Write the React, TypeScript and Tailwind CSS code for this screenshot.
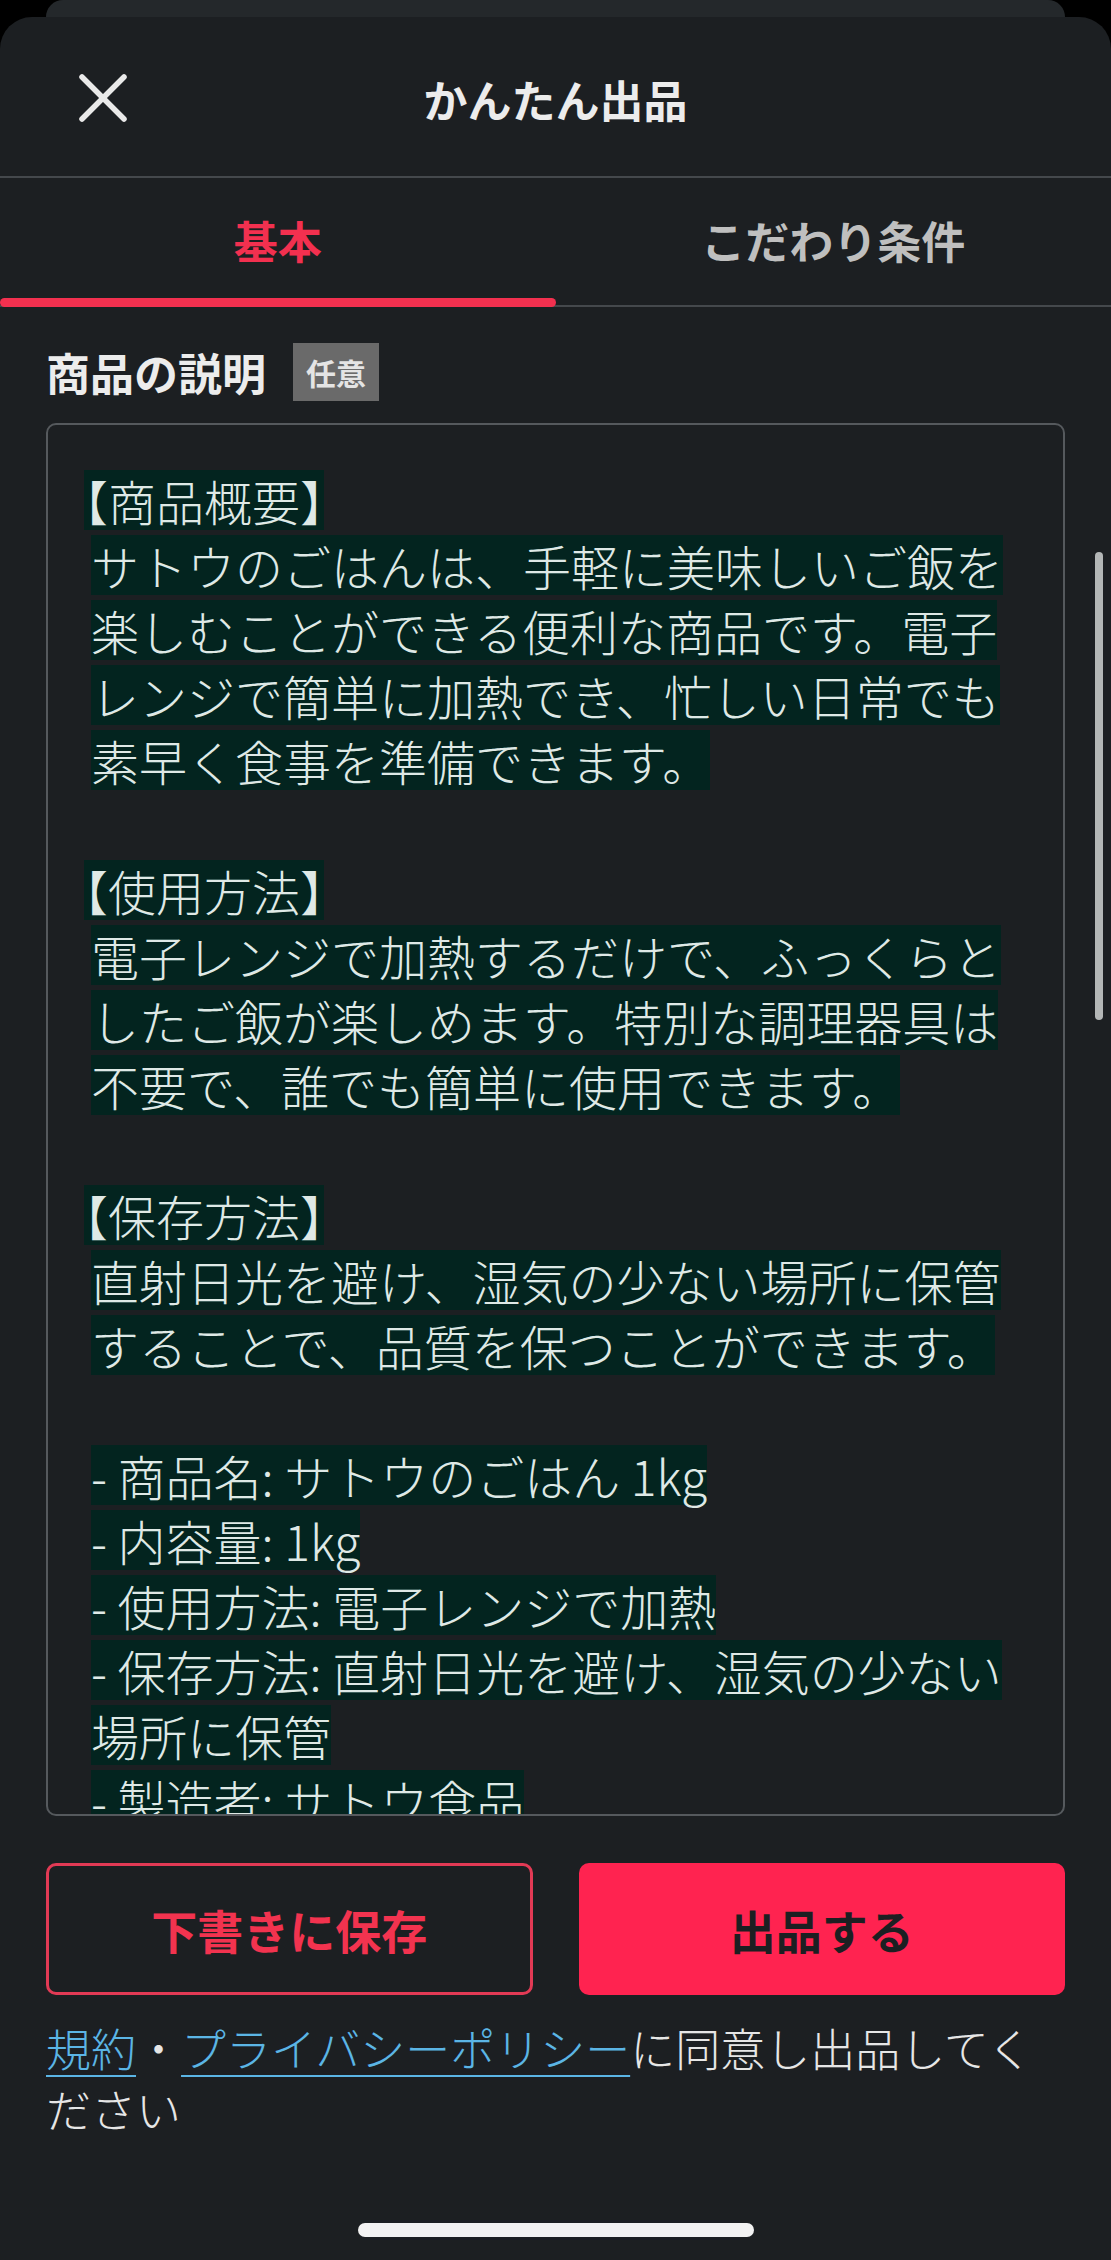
import React from 'react';

const jp = "font-['Noto_Sans_CJK_JP','Noto_Sans_CJK_SC',sans-serif]";

const lines: string[] = [
  '【商品概要】',
  'サトウのごはんは、手軽に美味しいご飯を',
  '楽しむことができる便利な商品です。電子',
  'レンジで簡単に加熱でき、忙しい日常でも',
  '素早く食事を準備できます。',
  '',
  '【使用方法】',
  '電子レンジで加熱するだけで、ふっくらと',
  'したご飯が楽しめます。特別な調理器具は',
  '不要で、誰でも簡単に使用できます。',
  '',
  '【保存方法】',
  '直射日光を避け、湿気の少ない場所に保管',
  'することで、品質を保つことができます。',
  '',
  '- 商品名: サトウのごはん 1kg',
  '- 内容量: 1kg',
  '- 使用方法: 電子レンジで加熱',
  '- 保存方法: 直射日光を避け、湿気の少ない',
  '場所に保管',
  '- 製造者: サトウ食品',
];

function CloseIcon() {
  return (
    <svg width="52" height="52" viewBox="0 0 52 52" fill="none" stroke="#e9e9e9" strokeWidth="5.5" strokeLinecap="round">
      <path d="M5 5 L47 47" />
      <path d="M47 5 L5 47" />
    </svg>
  );
}

function Line({ text }: { text: string }) {
  const heading = text.startsWith('【');
  return (
    <div className="h-[65px] flex items-center">
      {text && (
        <span className={`bg-[#03241f] h-[60px] leading-[60px] whitespace-pre ${heading ? '-ml-[7px]' : ''}`}>
          {heading ? (
            <>
              <span className="[font-feature-settings:'halt']">【</span>
              {text.slice(1, -1)}
              <span className="[font-feature-settings:'halt']">】</span>
            </>
          ) : (
            text
          )}
        </span>
      )}
    </div>
  );
}

export default function App() {
  return (
    <div className={`w-[1111px] h-[2260px] bg-black overflow-hidden flex flex-col ${jp}`}>
      {/* sheet behind */}
      <div className="mx-[46px] h-[17px] rounded-t-[20px] bg-[#24282b] shrink-0" />

      <div className="relative flex-1 flex flex-col bg-[#1c1f22] rounded-t-[32px]">
        {/* header */}
        <div className="h-[161px] border-b-2 border-[#44484c] flex items-center relative">
          <div className="pl-[77px] pt-[2px]">
            <CloseIcon />
          </div>
          <div className="absolute inset-x-0 top-[52px] text-center text-[44px] leading-[60px] font-bold text-[#ececec]">
            かんたん出品
          </div>
        </div>

        {/* tabs */}
        <div className="grid grid-cols-2 border-b-2 border-[#44484c] h-[129px]">
          <div className="relative flex items-center justify-center pb-[4px]">
            <span className="text-[44px] font-bold text-[#f2304f]">基本</span>
            <div className="absolute left-0 right-0 -bottom-[2px] h-[9px] rounded-full bg-[#f2304f]" />
          </div>
          <div className="flex items-center justify-center pb-[4px]">
            <span className="text-[44px] font-bold text-[#bfbfbf]">こだわり条件</span>
          </div>
        </div>

        {/* body */}
        <div className="px-[46px] flex-1 flex flex-col">
          <div className="flex items-center gap-[27px] pt-[36px]">
            <span className="text-[44px] font-bold text-[#ececec] leading-[58px]">商品の説明</span>
            <span className="h-[58px] px-[13px] flex items-center bg-[#6a6a6a] text-[30px] font-bold text-[#e4e4e4]">
              任意
            </span>
          </div>

          <div className="mt-[22px] h-[1393px] border-2 border-[#55595d] rounded-[10px] overflow-hidden pt-[42px] pl-[43px] text-[48px] font-light text-[#dfe9e6]">
            {lines.map((t, i) => (
              <Line key={i} text={t} />
            ))}
          </div>

          <div className="grid grid-cols-2 gap-[46px] mt-[47px]">
            <button className="h-[132px] border-[3px] border-[#e23a55] rounded-[10px] text-[46px] font-bold text-[#f2334f]">
              下書きに保存
            </button>
            <button className="h-[132px] bg-[#ff2350] rounded-[10px] text-[46px] font-bold text-[#1c1f22]">
              出品する
            </button>
          </div>

          <p className="mt-[22px] text-[45px] leading-[61px] font-light text-[#e6e6e6]">
            <a className="text-[#5bb5e5] underline decoration-2 underline-offset-[8px]">規約</a>・<a className="text-[#5bb5e5] underline decoration-2 underline-offset-[8px]">プライバシーポリシー</a>に同意し出品してください
          </p>

          <div className="mt-auto mb-[23px] mx-auto w-[396px] h-[14px] rounded-full bg-[#f2f2f2]" />
        </div>

        {/* scrollbar */}
        <div className="absolute right-[8px] top-[535px] w-[8px] h-[468px] rounded-full bg-[#b3b6b6]" />
      </div>
    </div>
  );
}
